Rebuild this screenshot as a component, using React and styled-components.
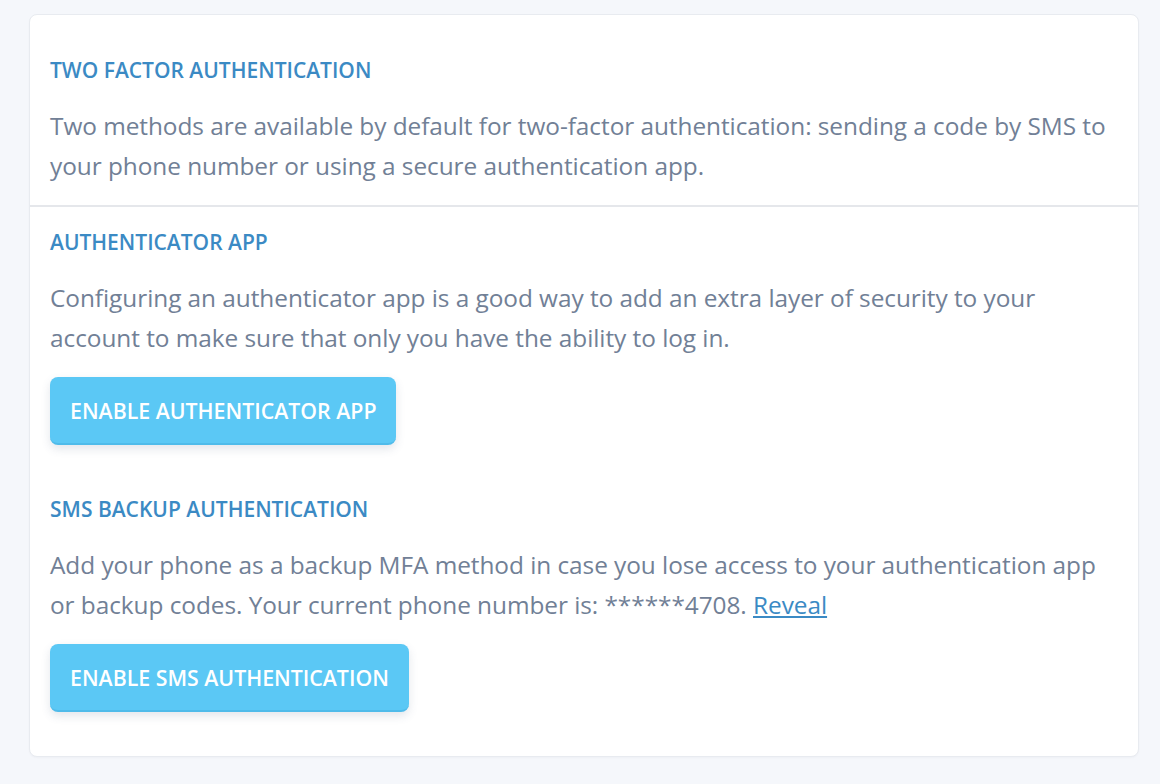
import React from "react";
import styled, { createGlobalStyle } from "styled-components";

const GlobalStyle = createGlobalStyle`
  html, body {
    margin: 0;
    padding: 0;
    background: #f5f7fb;
  }
  body {
    font-family: "Open Sans", "Noto Sans", sans-serif;
    -webkit-font-smoothing: antialiased;
  }
`;

const Page = styled.div`
  min-height: 784px;
  box-sizing: border-box;
  padding: 14px 21px 0 29px;
  background: #f5f7fb;
`;

const Card = styled.div`
  background: #ffffff;
  border: 1px solid #e8ebf0;
  border-radius: 8px;
  box-shadow: 0 1px 2px rgba(30, 41, 59, 0.03);
  overflow: hidden;
`;

const Section = styled.section`
  padding: ${p => p.$pad};
`;

const Divider = styled.hr`
  margin: 0;
  border: 0;
  border-top: 2px solid #e5e7eb;
`;

const Heading = styled.h2`
  margin: 0 0 20px;
  font-family: "Open Sans", "Noto Sans", sans-serif;
  font-size: 21px;
  font-weight: 600;
  line-height: 32px;
  color: #3b8ac4;
  text-transform: uppercase;
  margin-top: ${p => p.$top || 0}px;
`;

const Text = styled.p`
  margin: 0;
  font-size: 24.4px;
  line-height: 40px;
  color: #718096;
  letter-spacing: -0.05px;
`;

const Link = styled.a`
  color: #3b8ac4;
  text-decoration: underline;
  text-underline-offset: 2px;
  text-decoration-thickness: 2px;
  cursor: pointer;
`;

const Button = styled.button`
  display: block;
  margin-top: 19px;
  height: 68px;
  padding: 0 20px;
  border: 0;
  border-bottom: 2px solid #4fbbea;
  border-radius: 8px;
  background: #5bc8f5;
  color: #ffffff;
  font-family: "Open Sans", "Noto Sans", sans-serif;
  font-size: 21.3px;
  font-weight: 600;
  letter-spacing: 0;
  text-transform: uppercase;
  box-shadow: 0 4px 10px rgba(60, 80, 110, 0.14);
  cursor: pointer;
`;

export default function App() {
  return (
    <Page>
      <GlobalStyle />
      <Card>
        <Section $pad="39px 20px 19px">
          <Heading>Two Factor Authentication</Heading>
          <Text>
            Two methods are available by default for two-factor authentication: sending a code by SMS to
            your phone number or using a secure authentication app.
          </Text>
        </Section>
        <Divider />
        <Section $pad="19px 20px 44px">
          <Heading>Authenticator App</Heading>
          <Text>
            Configuring an authenticator app is a good way to add an extra layer of security to your
            account to make sure that only you have the ability to log in.
          </Text>
          <Button>Enable Authenticator App</Button>

          <Heading $top={48}>SMS Backup Authentication</Heading>
          <Text>
            Add your phone as a backup MFA method in case you lose access to your authentication app
            or backup codes. Your current phone number is: ******4708. <Link>Reveal</Link>
          </Text>
          <Button>Enable SMS Authentication</Button>
        </Section>
      </Card>
    </Page>
  );
}
